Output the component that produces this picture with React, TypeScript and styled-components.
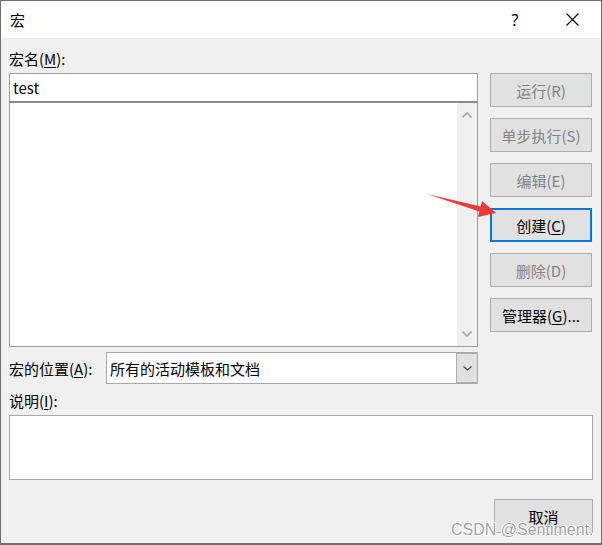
import React from 'react';
import styled, { createGlobalStyle } from 'styled-components';

const Global = createGlobalStyle`
  html, body { margin: 0; padding: 0; background: #ffffff; }
  body { font-family: "Noto Sans CJK SC", "Noto Sans", sans-serif; }
`;

const Window = styled.div`
  position: relative;
  box-sizing: border-box;
  width: 602px;
  height: 545px;
  border: 1px solid #707070;
  border-bottom-width: 2px;
  display: flex;
  flex-direction: column;
  background: #f0f0f0;
  font-family: "Noto Sans CJK SC", "Noto Sans", sans-serif;
  font-size: 15px;
  color: #000;
  overflow: hidden;
`;

const TitleBar = styled.div`
  height: 37px;
  flex: none;
  background: #fff;
  display: flex;
  align-items: center;
  padding: 0 6px 0 9px;
  gap: 11px;
`;

const Title = styled.span`
  flex: 1;
  font-size: 15px;
  line-height: 20px;
`;

const TitleButton = styled.div`
  width: 46px;
  height: 37px;
  display: flex;
  align-items: center;
  justify-content: center;
  font-family: "Noto Sans", sans-serif;
  font-size: 16px;
`;

const Body = styled.div`
  flex: 1;
  display: flex;
  flex-direction: column;
  padding: 11px 8px 0 8px;
`;

const Label = styled.div<{ $top?: number }>`
  height: 20px;
  line-height: 20px;
  margin-top: ${(p) => p.$top ?? 0}px;
  margin-bottom: 4px;
  white-space: nowrap;
  u { text-decoration-thickness: 1px; text-underline-offset: 2px; }
`;

const MainRow = styled.div`
  display: flex;
  gap: 12px;
`;

const LeftCol = styled.div`
  width: 469px;
  display: flex;
  flex-direction: column;
`;

const RightCol = styled.div`
  width: 102px;
  display: flex;
  flex-direction: column;
  gap: 11px;
`;

const TextBox = styled.div`
  box-sizing: border-box;
  height: 29px;
  border: 1px solid #a0a0a0;
  border-bottom-color: #8a8a8a;
  background: #fff;
  padding: 0 0 1px 3px;
  display: flex;
  align-items: center;
  font-size: 15px;
`;

const ListBox = styled.div`
  box-sizing: border-box;
  height: 245px;
  border: 1px solid #9a9ca2;
  border-top-color: #8a8a8a;
  background: #fff;
  display: flex;
  justify-content: flex-end;
`;

const ScrollStrip = styled.div`
  width: 20px;
  background: #f0f0f0;
  display: flex;
  flex-direction: column;
  align-items: center;
  justify-content: space-between;
  padding: 9px 0 9px;
`;

const LocationRow = styled.div`
  margin-top: 5px;
  height: 32px;
  display: flex;
  align-items: center;
`;

const LocationLabel = styled.div`
  width: 97px;
  white-space: nowrap;
  u { text-decoration-thickness: 1px; text-underline-offset: 2px; }
`;

const Select = styled.div`
  box-sizing: border-box;
  width: 372px;
  height: 32px;
  border: 1px solid #a8a8a8;
  background: #fff;
  display: flex;
`;

const SelectText = styled.div`
  flex: 1;
  padding-left: 3px;
  display: flex;
  align-items: center;
`;

const DropButton = styled.div`
  box-sizing: border-box;
  width: 21px;
  background: #e1e1e1;
  border: 1px solid #adadad;
  border-right: none;
  display: flex;
  align-items: center;
  justify-content: center;
`;

const Button = styled.div<{ $disabled?: boolean; $focused?: boolean; $width?: number }>`
  box-sizing: border-box;
  width: ${(p) => p.$width ?? 102}px;
  height: 34px;
  background: #e1e1e1;
  border: ${(p) => (p.$focused ? '2px solid #0078d7' : '1px solid #adadad')};
  color: ${(p) => (p.$disabled ? '#838383' : '#000')};
  display: flex;
  align-items: center;
  justify-content: center;
  font-size: 15px;
  white-space: nowrap;
  u { text-decoration-thickness: 1px; text-underline-offset: 2px; }
`;

const DescBox = styled.div`
  box-sizing: border-box;
  height: 65px;
  border: 1px solid #a8a8a8;
  background: #fff;
`;

const Footer = styled.div`
  margin-top: 19px;
  display: flex;
  justify-content: flex-end;
`;

const Overlay = styled.svg`
  position: absolute;
  left: -1px;
  top: -1px;
  pointer-events: none;
`;

const Watermark = styled.div`
  position: absolute;
  left: 450px;
  top: 519px;
  font-family: "Liberation Sans", Arial, sans-serif;
  font-size: 16px;
  line-height: 20px;
  color: rgba(120, 120, 120, 0.7);
  text-shadow: 0 0 1px #fff, 0 0 1px #fff, 1px 0 0 #fff, -1px 0 0 #fff, 0 1px 0 #fff, 0 -1px 0 #fff;
  white-space: nowrap;
  pointer-events: none;
`;

const Chevron = ({ dir, color, w = 10, h = 5, sw = 1.6 }: { dir: 'up' | 'down'; color: string; w?: number; h?: number; sw?: number }) => (
  <svg width={w} height={h + 1} viewBox={`0 0 ${w} ${h + 1}`}>
    <polyline
      points={dir === 'up' ? `0.5,${h + 0.5} ${w / 2},0.8 ${w - 0.5},${h + 0.5}` : `0.5,0.5 ${w / 2},${h} ${w - 0.5},0.5`}
      fill="none"
      stroke={color}
      strokeWidth={sw}
    />
  </svg>
);

const buttons: { label: React.ReactNode; disabled?: boolean; focused?: boolean }[] = [
  { label: '运行(R)', disabled: true },
  { label: '单步执行(S)', disabled: true },
  { label: '编辑(E)', disabled: true },
  { label: <>创建(<u>C</u>)</>, focused: true },
  { label: '删除(D)', disabled: true },
  { label: <>管理器(<u>G</u>)...</> },
];

export default function App() {
  return (
    <>
      <Global />
      <Window>
        <TitleBar>
          <Title>宏</Title>
          <TitleButton>?</TitleButton>
          <TitleButton>
            <svg width="13" height="13" viewBox="0 0 13 13">
              <path d="M0.5 0.5 L12.5 12.5 M12.5 0.5 L0.5 12.5" stroke="#000" strokeWidth="1.1" />
            </svg>
          </TitleButton>
        </TitleBar>
        <Body>
          <Label>
            宏名(<u>M</u>):
          </Label>
          <MainRow>
            <LeftCol>
              <TextBox>test</TextBox>
              <ListBox>
                <ScrollStrip>
                  <Chevron dir="up" color="#a6a6a6" />
                  <Chevron dir="down" color="#a6a6a6" />
                </ScrollStrip>
              </ListBox>
              <LocationRow>
                <LocationLabel>
                  宏的位置(<u>A</u>):
                </LocationLabel>
                <Select>
                  <SelectText>所有的活动模板和文档</SelectText>
                  <DropButton>
                    <Chevron dir="down" color="#404040" w={9} h={4} sw={1.1} />
                  </DropButton>
                </Select>
              </LocationRow>
            </LeftCol>
            <RightCol>
              {buttons.map((b, i) => (
                <Button key={i} $disabled={b.disabled} $focused={b.focused}>
                  {b.label}
                </Button>
              ))}
            </RightCol>
          </MainRow>
          <Label $top={7}>
            说明(<u>I</u>):
          </Label>
          <DescBox />
          <Footer>
            <Button $width={99}>取消</Button>
          </Footer>
        </Body>
        <Overlay width="602" height="545" viewBox="0 0 602 545">
          <polygon
            points="427,194 480.7,206.6 482,201 496,213 478,217 479.3,211.4"
            fill="#ef3a36"
          />
        </Overlay>
        <Watermark>CSDN @Sentiment.</Watermark>
      </Window>
    </>
  );
}
